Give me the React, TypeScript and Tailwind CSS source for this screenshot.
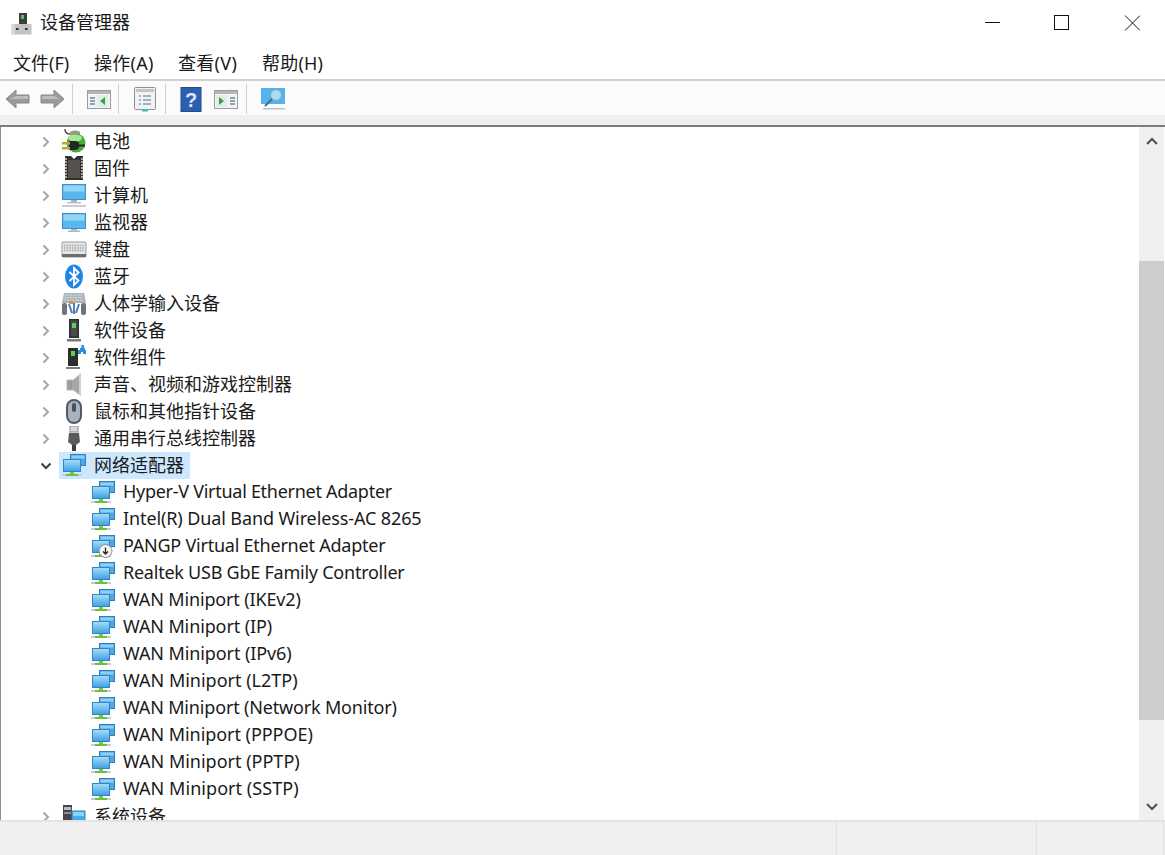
import React from "react";

const Font = '"Noto Sans","Noto Sans CJK SC",sans-serif';

function NetIcon({ badge }: { badge?: boolean }) {
  return (
    <svg width="26" height="25" viewBox="0 0 26 25">
      <defs>
        <linearGradient id="netFront" x1="0" y1="0" x2="0" y2="1">
          <stop offset="0" stopColor="#a8defb" />
          <stop offset="1" stopColor="#3d9fe2" />
        </linearGradient>
      </defs>
      <rect x="9.500" y="1.500" width="15" height="11" fill="#4ea6e3" stroke="#2f7fb8" />
      <rect x="10.500" y="2.500" width="13" height="3" fill="#8cd0f7" />
      <rect x="2.500" y="6.500" width="17" height="12" fill="url(#netFront)" stroke="#2e86c4" />
      <rect x="9" y="19" width="4" height="2" fill="#77c846" />
      <rect x="5" y="21" width="12" height="2" fill="#6cc13c" />
      <rect x="1" y="21" width="4" height="2" fill="#c8ccd0" />
      <rect x="17" y="21" width="4" height="2" fill="#c8ccd0" />
      {badge && (
        <>
          <circle cx="15.500" cy="17" r="6.500" fill="#f4f4f4" stroke="#8a8a8a" />
          <path d="M15.500 13.500v6M13 17.500l2.500 2.500 2.500-2.500" fill="none" stroke="#222" strokeWidth="1.300" />
        </>
      )}
    </svg>
  );
}

function Icon({ name }: { name: string }) {
  switch (name) {
    case "battery":
      return (
        <svg width="26" height="25" viewBox="0 0 26 25">
          <path d="M4 0c0 3 2 5 5 5" fill="none" stroke="#555" strokeWidth="1.500" />
          <path d="M9 3c3-2 7-2 10 0v3H9z" fill="#9a9a9a" />
          <ellipse cx="15" cy="14" rx="9.500" ry="9.500" fill="#43ad35" />
          <ellipse cx="14" cy="9" rx="7" ry="3.500" fill="#a9e795" />
          <path d="M8 12h6a4.500 4.500 0 0 1 0 9H8z" fill="#262626" />
          <rect x="1" y="13" width="8" height="2.500" fill="#c2a33b" />
          <rect x="1" y="18" width="8" height="2.500" fill="#c2a33b" />
          <rect x="18" y="15.500" width="6" height="2" fill="#262626" />
        </svg>
      );
    case "chip":
      return (
        <svg width="26" height="25" viewBox="0 0 26 25">
          <path d="M4 0h6l3 3 3-3h6v24H4z" fill="#33322f" />
          <rect x="7" y="4" width="12" height="18" fill="#55524e" />
          <path d="M4 3h2M4 6h2M4 9h2M4 12h2M4 15h2M4 18h2M4 21h2M20 3h2M20 6h2M20 9h2M20 12h2M20 15h2M20 18h2M20 21h2" stroke="#d0d0d0" strokeWidth="1.500" />
        </svg>
      );
    case "computer":
      return (
        <svg width="26" height="25" viewBox="0 0 26 25">
          <rect x="1.500" y="1.500" width="23" height="15" fill="#5ab6ef" stroke="#3d8fc6" />
          <rect x="2.500" y="2.500" width="21" height="6" fill="#93d4f8" />
          <rect x="10" y="17" width="6" height="2" fill="#9fb2bf" />
          <rect x="6" y="19" width="14" height="1.500" fill="#b6c2cb" />
          <rect x="1" y="22" width="24" height="2" fill="#c9cdd1" />
        </svg>
      );
    case "monitor":
      return (
        <svg width="26" height="25" viewBox="0 0 26 25">
          <rect x="1.500" y="3.500" width="23" height="15" fill="#5ab6ef" stroke="#3d8fc6" />
          <rect x="2.500" y="4.500" width="21" height="6" fill="#93d4f8" />
          <rect x="10" y="19" width="6" height="1.500" fill="#9fb2bf" />
          <rect x="7" y="20.500" width="12" height="1.500" fill="#a8b8c4" />
        </svg>
      );
    case "keyboard":
      return (
        <svg width="26" height="25" viewBox="0 0 26 25">
          <rect x="1" y="5" width="24" height="15" rx="1" fill="#e6e6e6" stroke="#9a9a9a" />
          <path d="M3 8.500h20M3 11h20M3 13.500h20" stroke="#a8a8a8" strokeWidth="1.400" strokeDasharray="1.600 1" />
          <rect x="1" y="17" width="24" height="3" fill="#6e6e6e" />
        </svg>
      );
    case "bluetooth":
      return (
        <svg width="26" height="25" viewBox="0 0 26 25">
          <ellipse cx="13" cy="12.500" rx="9" ry="12" fill="#1f86e8" />
          <path d="M8.500 8l9 8.500-4.500 4.500V4l4.500 4.500-9 8.500" fill="none" stroke="#fff" strokeWidth="1.800" />
        </svg>
      );
    case "hid":
      return (
        <svg width="26" height="25" viewBox="0 0 26 25">
          <path d="M3 2h20l2 10H1z" fill="#aab2ba" />
          <path d="M4 4h18M4 6.500h18M3.500 9h19" stroke="#e8eaec" strokeWidth="1.200" strokeDasharray="1.600 1" />
          <rect x="1" y="12" width="5" height="12" rx="2" fill="#6d7680" />
          <rect x="20" y="12" width="5" height="12" rx="2" fill="#6d7680" />
          <path d="M8 13l3 9M13 12v11M18 13l-3 9" stroke="#4d7fae" strokeWidth="2" />
          <rect x="8" y="10" width="4" height="3" fill="#d89538" />
        </svg>
      );
    case "softdev":
      return (
        <svg width="26" height="25" viewBox="0 0 26 25">
          <rect x="8" y="1" width="10" height="19" fill="#2d2d2d" />
          <rect x="9.500" y="2.500" width="7" height="16" fill="#4b4b4b" />
          <rect x="11" y="5" width="4" height="5" fill="#57d35a" />
          <rect x="6" y="21" width="14" height="2.500" fill="#7c7c7c" />
        </svg>
      );
    case "softcomp":
      return (
        <svg width="26" height="25" viewBox="0 0 26 25">
          <rect x="7" y="3" width="10" height="18" fill="#2d2d2d" />
          <rect x="10" y="6" width="4" height="5" fill="#57d35a" />
          <rect x="5" y="22" width="14" height="2" fill="#7c7c7c" />
          <path d="M17 5h2V3h1.500V0h2.500v3h1v2h1v4h-3V7h-2v2h-3z" fill="#2a8ee0" />
        </svg>
      );
    case "sound":
      return (
        <svg width="26" height="25" viewBox="0 0 26 25">
          <rect x="6" y="8" width="6" height="10" fill="#9c9c9c" stroke="#b9b9b9" />
          <path d="M12 8l8-7v23l-8-6z" fill="#a7a7a7" />
          <path d="M18 2l2-1v23l-2-1z" fill="#d0d0d0" />
        </svg>
      );
    case "mouse":
      return (
        <svg width="26" height="25" viewBox="0 0 26 25">
          <rect x="5" y="0" width="16" height="25" rx="8" fill="#4f5a6b" />
          <rect x="7" y="2" width="12" height="21" rx="6" fill="#a9b3c0" />
          <rect x="11" y="4" width="4" height="9" rx="2" fill="#49525f" />
        </svg>
      );
    case "usb":
      return (
        <svg width="26" height="25" viewBox="0 0 26 25">
          <rect x="9" y="0" width="8" height="6" fill="#d9d9d9" stroke="#8e8e8e" />
          <path d="M8 7h10l1 9-4 3h-4l-4-3z" fill="#5a5a5a" />
          <rect x="11" y="19" width="4" height="6" fill="#3f3f3f" />
        </svg>
      );
    case "net":
      return <NetIcon />;
    case "system":
      return (
        <svg width="26" height="25" viewBox="0 0 26 25">
          <rect x="2" y="1" width="9" height="22" fill="#44464a" />
          <rect x="3" y="3" width="7" height="3" fill="#b9bcc0" />
          <rect x="3" y="8" width="7" height="2" fill="#8d9095" />
          <rect x="11" y="7" width="13" height="13" fill="#4aa9ea" stroke="#2e86c4" />
          <rect x="12" y="8" width="11" height="4" fill="#8fd0f7" />
        </svg>
      );
  }
  return null;
}

function Chevron({ open }: { open?: boolean }) {
  return (
    <svg width="10" height="12" viewBox="0 0 10 12" className="shrink-0">
      {open ? (
        <path d="M0.500 3.500L5 8l4.500-4.500" fill="none" stroke="#404040" strokeWidth="2" />
      ) : (
        <path d="M2.500 1.500L7 6l-4.500 4.500" fill="none" stroke="#a6a6a6" strokeWidth="2" />
      )}
    </svg>
  );
}

function Row({ icon, label, open, selected }: { icon: string; label: string; open?: boolean; selected?: boolean }) {
  return (
    <div className="h-[27px] flex items-center pl-[40px] shrink-0">
      <Chevron open={open} />
      <div className={`h-[27px] ml-[8px] flex items-center pl-[2px] pr-[6px] ${selected ? "bg-[#cce8ff]" : ""}`}>
        <Icon name={icon} />
        <span className="ml-[7px] text-[18px] text-[#1a1a1a] whitespace-nowrap">{label}</span>
      </div>
    </div>
  );
}

function Child({ label, track, badge }: { label: string; track: string; badge?: boolean }) {
  return (
    <div className="h-[27px] flex items-center pl-[89px] shrink-0">
      <NetIcon badge={badge} />
      <span className={`ml-[7px] -mt-[2px] text-[18px] text-[#1a1a1a] whitespace-nowrap ${track}`}>{label}</span>
    </div>
  );
}

function Sep() {
  return <div className="w-px h-[30px] bg-[#d0d0d0] shrink-0" />;
}

function Arrow({ left }: { left?: boolean }) {
  return (
    <svg width="26" height="24" viewBox="0 0 26 24" className={left ? "" : "-scale-x-100"}>
      <path d="M1 12l10-9v5h13v8H11v5z" fill="#9a9a9a" stroke="#8a8a8a" />
      <path d="M11 9h12v3H5z" fill="#bdbdbd" />
    </svg>
  );
}

function TreePane({ right }: { right?: boolean }) {
  return (
    <svg width="26" height="24" viewBox="0 0 26 24">
      <rect x="1.500" y="3.500" width="23" height="18" fill="#f4f4f4" stroke="#9b9b9b" />
      <rect x="2" y="4" width="22" height="3" fill="#b5b5b5" />
      <path d="M4 11h5M4 14h5M4 17h5" stroke="#6f8799" strokeWidth="1.500" transform={right ? "translate(13 0)" : ""} />
      <rect x={right ? 3 : 11} y="8" width="11" height="12" fill="#dfeee6" />
      <path d={right ? "M6 10v8l5-4z" : "M19 10v8l-5-4z"} fill="#3f9e3c" />
    </svg>
  );
}

const kids = [
  { label: "Hyper-V Virtual Ethernet Adapter", track: "tracking-[-0.28px]" },
  { label: "Intel(R) Dual Band Wireless-AC 8265", track: "tracking-[-0.11px]" },
  { label: "PANGP Virtual Ethernet Adapter", track: "tracking-[-0.23px]" },
  { label: "Realtek USB GbE Family Controller", track: "tracking-[-0.24px]" },
  { label: "WAN Miniport (IKEv2)", track: "tracking-[-0.15px]" },
  { label: "WAN Miniport (IP)", track: "tracking-[-0.12px]" },
  { label: "WAN Miniport (IPv6)", track: "tracking-[-0.1px]" },
  { label: "WAN Miniport (L2TP)", track: "" },
  { label: "WAN Miniport (Network Monitor)", track: "tracking-[-0.17px]" },
  { label: "WAN Miniport (PPPOE)", track: "tracking-[-0.05px]" },
  { label: "WAN Miniport (PPTP)", track: "" },
  { label: "WAN Miniport (SSTP)", track: "tracking-[0.05px]" },
];

export default function App() {
  const top = [
    ["battery", "电池"],
    ["chip", "固件"],
    ["computer", "计算机"],
    ["monitor", "监视器"],
    ["keyboard", "键盘"],
    ["bluetooth", "蓝牙"],
    ["hid", "人体学输入设备"],
    ["softdev", "软件设备"],
    ["softcomp", "软件组件"],
    ["sound", "声音、视频和游戏控制器"],
    ["mouse", "鼠标和其他指针设备"],
    ["usb", "通用串行总线控制器"],
  ];
  return (
    <div className="w-[1165px] h-[855px] flex flex-col bg-white overflow-hidden" style={{ fontFamily: Font }}>
      <div className="h-[45px] flex items-center justify-between shrink-0">
        <div className="flex items-center pl-[11px] pt-px">
          <svg width="21" height="23" viewBox="0 0 21 23">
            <rect x="8" y="1" width="8" height="12" fill="#3e3e3e" />
            <rect x="10" y="3" width="3" height="4" fill="#55c060" />
            <rect x="0.500" y="12" width="20" height="10.500" fill="#c4c4c4" />
            <rect x="0.500" y="12" width="3" height="10.500" fill="#dcdcdc" />
            <rect x="5" y="16" width="2.500" height="2" fill="#333" />
            <rect x="14" y="16" width="2.500" height="2" fill="#333" />
          </svg>
          <span className="ml-[8px] -mt-px text-[18px] text-[#1a1a1a]">设备管理器</span>
        </div>
        <div className="flex items-center gap-[54px] pr-[25px] pt-px">
          <svg width="16" height="16" viewBox="0 0 16 16"><path d="M1 7.500h15" stroke="#111" /></svg>
          <svg width="16" height="16" viewBox="0 0 16 16"><rect x="0.500" y="0.500" width="14" height="14" fill="none" stroke="#111" /></svg>
          <svg width="16" height="16" viewBox="0 0 16 16"><path d="M1 0.500l15 15M16 0.500l-15 15" stroke="#111" /></svg>
        </div>
      </div>
      <div className="h-[34px] flex items-center pl-[13px] pt-[2px] text-[18px] text-[#1a1a1a] shrink-0">
        <span className="w-[81px]">文件(F)</span>
        <span className="w-[84px] tracking-[0.3px]">操作(A)</span>
        <span className="w-[84px] tracking-[0.3px]">查看(V)</span>
        <span className="tracking-[0.2px]">帮助(H)</span>
      </div>
      <div className="h-[36px] border-t-2 border-[#d0d0d0] bg-[#fbfbfb] flex items-center pl-[5px] pt-[2px] shrink-0">
        <Arrow left />
        <div className="w-[8px]" />
        <Arrow />
        <div className="w-[7px]" />
        <Sep />
        <div className="w-[13px]" />
        <TreePane />
        <div className="w-[6px]" />
        <Sep />
        <div className="w-[13px]" />
        <svg width="26" height="26" viewBox="0 0 26 26">
          <rect x="2.500" y="1.500" width="21" height="22" rx="1" fill="#f2f2f2" stroke="#8f8f8f" />
          <rect x="4" y="3" width="18" height="3" fill="#c4c4c4" />
          <path d="M7 10h2M11 10h8M7 14h2M11 14h8M7 18h2M11 18h8" stroke="#7f9fb4" strokeWidth="1.400" />
          <rect x="10" y="23" width="6" height="2.500" fill="#45b4c9" />
        </svg>
        <div className="w-[7px]" />
        <Sep />
        <div className="w-[14px]" />
        <svg width="22" height="25" viewBox="0 0 22 25">
          <rect x="1" y="0.500" width="20" height="24" fill="#2d5fb0" />
          <rect x="1" y="0.500" width="20" height="24" fill="none" stroke="#234a8f" />
          <text x="11" y="20" textAnchor="middle" fontSize="20" fontWeight="700" fill="#dbe6f7" fontFamily="Liberation Sans">?</text>
        </svg>
        <div className="w-[11px]" />
        <TreePane right />
        <div className="w-[7px]" />
        <Sep />
        <div className="w-[13px]" />
        <svg width="26" height="24" viewBox="0 0 26 24">
          <rect x="1" y="1" width="24" height="16" fill="#55b3ec" />
          <circle cx="16" cy="8" r="5.500" fill="#a9dcf3" stroke="#7fa3b5" />
          <path d="M12 12l-7 7" stroke="#3f6f83" strokeWidth="2" />
          <rect x="3" y="21" width="22" height="1.500" fill="#b5c3cb" />
        </svg>
      </div>
      <div className="h-[10px] bg-[#f0f0f0] shrink-0" />
      <div className="h-[2px] bg-[#7c7c7c] shrink-0" />
      <div className="flex-1 min-h-0 flex border-l border-[#8c8c8c] pt-px">
        <div className="flex-1 min-w-0 flex flex-col overflow-hidden">
          {top.map(([i, l]) => (
            <Row key={l} icon={i} label={l} />
          ))}
          <Row icon="net" label="网络适配器" open selected />
          {kids.map((k, i) => (
            <Child key={k.label} label={k.label} track={k.track} badge={i === 2} />
          ))}
          <Row icon="system" label="系统设备" />
        </div>
        <div className="w-[25px] mr-px -mt-px bg-[#f0f0f0] flex flex-col items-center shrink-0">
          <svg width="14" height="10" viewBox="0 0 14 10" className="mt-[9px] shrink-0">
            <path d="M2 8l5-5 5 5" fill="none" stroke="#505050" strokeWidth="2" />
          </svg>
          <div className="w-full h-[459px] mt-[115px] bg-[#cdcdcd] shrink-0" />
          <div className="flex-1" />
          <svg width="14" height="10" viewBox="0 0 14 10" className="mb-[8px] shrink-0">
            <path d="M2 2l5 5 5-5" fill="none" stroke="#505050" strokeWidth="2" />
          </svg>
        </div>
      </div>
      <div className="h-[35px] border-t-2 border-[#e3e3e3] bg-[#f0f0f0] flex justify-end pr-px shrink-0">
        <div className="w-[200px] border-l border-[#e0e0e0]" />
        <div className="w-[128px] border-l border-r border-[#e0e0e0]" />
      </div>
    </div>
  );
}
